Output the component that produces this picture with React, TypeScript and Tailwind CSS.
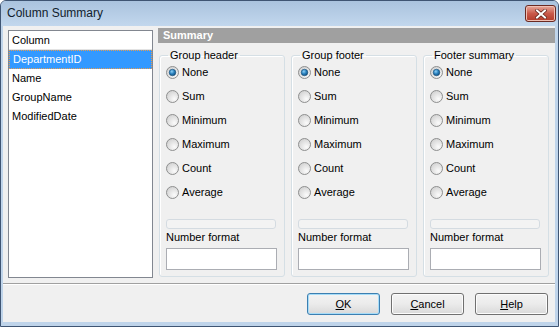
const options = ["None", "Sum", "Minimum", "Maximum", "Count", "Average"];
const columns = ["DepartmentID", "Name", "GroupName", "ModifiedDate"];

function Radio({ checked }: { checked: boolean }) {
  return (
    <svg width="13" height="13" viewBox="0 0 13 13" className="shrink-0">
      <defs>
        <radialGradient id="rf" cx="0.65" cy="0.7" r="0.7">
          <stop offset="0" stopColor="#fbfbfb" />
          <stop offset="1" stopColor="#d4d4d4" />
        </radialGradient>
        <radialGradient id="dot" cx="0.4" cy="0.35" r="0.7">
          <stop offset="0" stopColor="#8fd0f5" />
          <stop offset="0.5" stopColor="#2a82bf" />
          <stop offset="1" stopColor="#0d4a7a" />
        </radialGradient>
      </defs>
      <circle cx="6.5" cy="6.5" r="6" fill="url(#rf)" stroke="#8e8f8f" strokeWidth="1" />
      {checked && <circle cx="6.5" cy="6.5" r="3.3" fill="url(#dot)" stroke="#1b4f77" strokeWidth="0.6" />}
    </svg>
  );
}

function GroupBox({ title }: { title: string }) {
  return (
    <fieldset className="w-[126px] h-[228px] shrink-0 rounded-[3px] border border-[#d5dfe5] px-[6px] shadow-[inset_1px_1px_0_#fff]">
      <legend className="ml-[2px] px-[2px] leading-[13px]">{title}</legend>
      <div className="-mt-[2px] flex flex-col">
        {options.map((o, i) => (
          <label key={o} className="flex h-[24px] items-center gap-[3px]">
            <Radio checked={i === 0} />
            <span>{o}</span>
          </label>
        ))}
      </div>
      <div className="mt-[15px] h-[10px] w-[110px] rounded-[3px] border border-[#d4dbe1] bg-[#f3f3f3]" />
      <div className="mt-[2px] leading-[13px]">Number format</div>
      <div className="mt-[4px] h-[22px] w-[111px] border border-[#abadb3] bg-white" />
    </fieldset>
  );
}

function Btn({ first, rest, def }: { first: string; rest: string; def?: boolean }) {
  return (
    <button
      className={`h-[22px] w-[73px] rounded-[3px] border bg-linear-to-b from-[#f3f3f3] via-[#ebebeb] to-[#d9d9d9] leading-none ${
        def ? "border-[#3c7fb1] shadow-[inset_0_0_0_1px_#a6dcf8]" : "border-[#707070] shadow-[inset_0_0_0_1px_#fcfcfc]"
      }`}
    >
      <u>{first}</u>
      {rest}
    </button>
  );
}

export default function App() {
  return (
    <div className="h-[327px] w-[559px] overflow-hidden rounded-t-[6px] border border-[#3f5573] bg-[#bfd4ea] font-['Liberation_Sans',Arial,sans-serif] text-[11px] text-black">
      {/* title bar */}
      <div className="flex h-[25px] items-start justify-between bg-linear-to-b from-[#aac3de] to-[#c2d7ed] pl-[6px] pr-[2px]">
        <span className="mt-[5px] text-[12px] leading-[15px] text-[#101c2c]">Column Summary</span>
        <div className="mt-[4px] flex h-[17px] w-[31px] items-center justify-center rounded-[3px] border border-[#6b2a22] bg-linear-to-b from-[#e6a89b] via-[#c9594a] to-[#b23b2a] shadow-[inset_0_0_0_1px_#f0c0b4]">
          <svg width="12" height="10" viewBox="0 0 12 10">
            <path d="M2 1.5 L10 8.5 M10 1.5 L2 8.5" stroke="#5a1f18" strokeWidth="3.4" strokeLinecap="square" />
            <path d="M2 1.5 L10 8.5 M10 1.5 L2 8.5" stroke="#ffffff" strokeWidth="2" strokeLinecap="square" />
          </svg>
        </div>
      </div>

      {/* client area */}
      <div className="ml-[2px] mr-[3px] flex h-[296px] flex-col bg-[#f0f0f0]">
        <div className="flex h-[257px] pl-[5px]">
          {/* column list */}
          <div className="mt-[4px] h-[248px] w-[145px] shrink-0 border border-[#828790] bg-white">
            <div className="flex h-[19px] items-center border-b border-[#e3e3e3] pl-[3px]">Column</div>
            {columns.map((c, i) => (
              <div
                key={c}
                className={`flex h-[19px] items-center pl-[3px] ${
                  i === 0 ? "border border-dotted border-[#e79c4f] bg-[#3399ff] pl-[2px] text-white" : ""
                }`}
              >
                {c}
              </div>
            ))}
          </div>

          {/* summary panel */}
          <div className="ml-[5px] mt-[2px] flex flex-1 flex-col">
            <div className="flex h-[15px] items-center bg-[#a0a0a0] pl-[5px] text-[11px] font-bold text-white">Summary</div>
            <div className="mt-[6px] flex gap-[6px] pl-[1px]">
              <GroupBox title="Group header" />
              <GroupBox title="Group footer" />
              <GroupBox title="Footer summary" />
            </div>
          </div>
        </div>

        <div className="border-t border-[#a0a0a0] shadow-[0_1px_0_#ffffff]" />

        <div className="flex justify-end gap-[11px] pr-[7px] pt-[9px]">
          <Btn first="O" rest="K" def />
          <Btn first="C" rest="ancel" />
          <Btn first="H" rest="elp" />
        </div>
      </div>
    </div>
  );
}
